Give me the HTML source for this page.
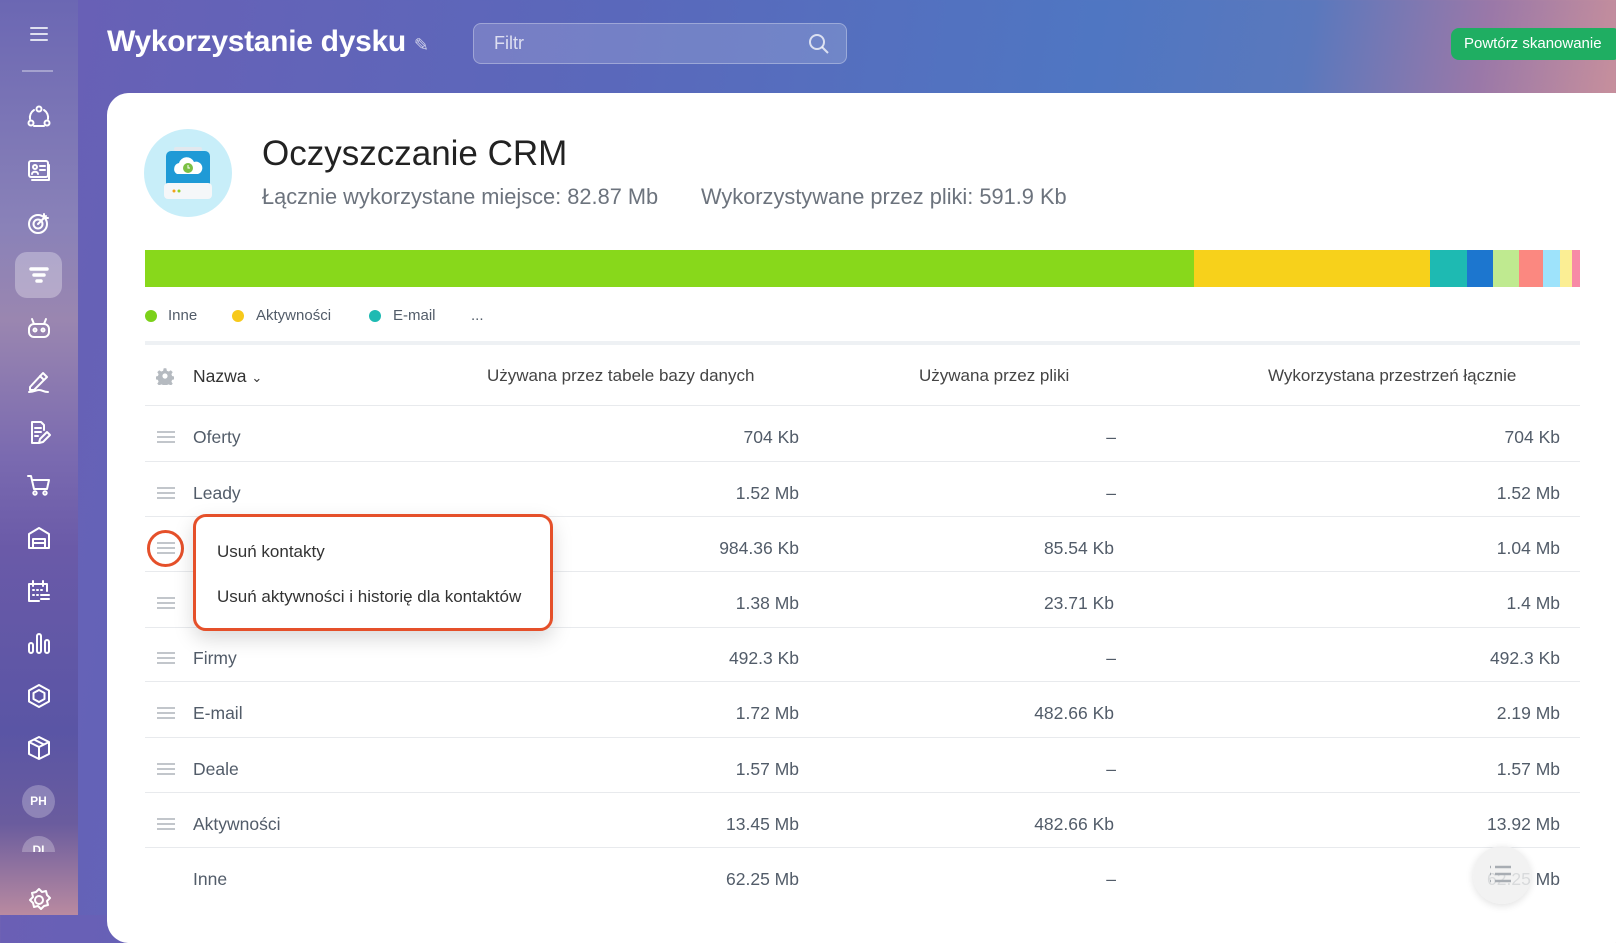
<!DOCTYPE html>
<html><head><meta charset="utf-8"><style>
*{margin:0;padding:0;box-sizing:border-box}
body{width:1616px;height:915px;overflow:hidden;font-family:"Liberation Sans",sans-serif;position:relative;
background:linear-gradient(100deg,#6a5fb5 0%,#5a68bb 35%,#4f76c2 62%,#5a78bd 74%,#9a78a8 84%,#c8909c 92%,#d8a8a0 100%)}
.side{position:absolute;left:0;top:0;width:78px;height:915px;background:linear-gradient(180deg,#6b67b3 0%,#8a82b8 25%,#9a86b0 35%,#7a6ab0 50%,#6a5aa8 60%,#5a55a5 80%,#6a5c9e 90%,#b98aa0 100%)}
.side .ic{position:absolute;left:25px;width:28px;height:28px}
.side svg{stroke:#fff;fill:none;stroke-width:2;stroke-linecap:round;stroke-linejoin:round}
.title{position:absolute;left:107px;top:25px;color:#fff;font-size:30px;font-weight:bold;letter-spacing:-0.3px}
.filter{position:absolute;left:473px;top:23px;width:374px;height:41px;border-radius:8px;background:rgba(255,255,255,.16);border:1px solid rgba(255,255,255,.3);color:rgba(255,255,255,.75);font-size:18px;padding:9px 20px}
.btn{position:absolute;left:1451px;top:28px;width:170px;height:32px;border-radius:8px;background:#1fae62;color:#fff;font-size:15px;padding:7px 13px}
.card{position:absolute;left:107px;top:93px;width:1530px;height:850px;background:#fff;border-radius:22px}
.a{position:absolute}
.t{color:#333;font-size:17.5px}
.g{color:#525c69}
.row{position:absolute;left:145px;width:1435px;height:1px;background:#e8eaed}
.hb{position:absolute;left:157px;width:18px;height:12px;border-top:2px solid #c2c6cb;border-bottom:2px solid #c2c6cb}
.hb:after{content:"";position:absolute;left:0;right:0;top:3px;height:2px;background:#c2c6cb}
.r{position:absolute;text-align:right;font-size:17.5px;color:#525c69}
</style></head><body>
<div class="side">
 <svg class="ic" style="top:20px" viewBox="0 0 28 28"><path d="M6 8h16M6 14h16M6 20h16" stroke="#dfe0f0"/></svg>
 <div style="position:absolute;left:22px;top:70px;width:31px;height:2px;background:rgba(255,255,255,.35)"></div>
 <svg class="ic" style="top:103px" viewBox="0 0 28 28"><circle cx="14" cy="6" r="2.5"/><circle cx="6" cy="20" r="2.5"/><circle cx="22" cy="20" r="2.5"/><path d="M9 7a9 9 0 0 0-4 9M19 7a9 9 0 0 1 4 9M9 23h10"/></svg>
 <svg class="ic" style="top:156px" viewBox="0 0 28 28"><rect x="4" y="5" width="19" height="16" rx="2"/><path d="M7 24h17V9"/><circle cx="10" cy="11" r="2"/><path d="M7 18c0-3 6-3 6 0M15 10h5M15 14h5"/></svg>
 <svg class="ic" style="top:209px" viewBox="0 0 28 28"><circle cx="13" cy="15" r="9"/><circle cx="13" cy="15" r="4.5"/><path d="M13 15l8-8M19 5v4h4"/></svg>
 <div style="position:absolute;left:15px;top:252px;width:47px;height:46px;border-radius:12px;background:rgba(255,255,255,.3)"></div>
 <svg class="ic" style="top:261px" viewBox="0 0 28 28"><path d="M6 8h16M9 14h10M12 20h4" stroke-width="3.5"/></svg>
 <svg class="ic" style="top:314px" viewBox="0 0 28 28"><rect x="4" y="10" width="20" height="13" rx="5"/><circle cx="10" cy="16" r="1.5"/><circle cx="18" cy="16" r="1.5"/><path d="M9 10l-2-5M19 10l2-5"/></svg>
 <svg class="ic" style="top:367px" viewBox="0 0 28 28"><path d="M5 20L18 6l4 4L9 23H5zM15 9l4 4M4 25c6 0 6-2 10-2s4 2 9 2"/></svg>
 <svg class="ic" style="top:419px" viewBox="0 0 28 28"><path d="M19 11V6l-3-3H7v21h6M10 9h6M10 13h6M10 17h3M14 24l1-4 7-7 3 3-7 7z"/></svg>
 <svg class="ic" style="top:471px" viewBox="0 0 28 28"><path d="M3 5h3l3 13h13l2-9H8"/><circle cx="10" cy="22" r="1.7"/><circle cx="20" cy="22" r="1.7"/></svg>
 <svg class="ic" style="top:524px" viewBox="0 0 28 28"><path d="M4 24V10l10-6 10 6v14zM8 24v-9h12v9M8 19h12"/></svg>
 <svg class="ic" style="top:577px" viewBox="0 0 28 28"><path d="M22 14V7H4v17h10M8 4v5M18 4v5M8 13h1M12 13h1M16 13h1M8 18h1M12 18h1M16 18h8M16 22h8"/></svg>
 <svg class="ic" style="top:629px" viewBox="0 0 28 28"><rect x="4" y="14" width="4" height="10" rx="2"/><rect x="12" y="5" width="4" height="19" rx="2"/><rect x="20" y="11" width="4" height="13" rx="2"/></svg>
 <svg class="ic" style="top:682px" viewBox="0 0 28 28"><path d="M14 3l10 5.5v11L14 25 4 19.5v-11z"/><path d="M14 8l5.5 3v6L14 20l-5.5-3v-6z"/></svg>
 <svg class="ic" style="top:734px" viewBox="0 0 28 28"><path d="M14 3l10 5v12l-10 5-10-5V8zM4 8l10 5 10-5M14 13v12M9 5.5l10 5"/></svg>
 <div style="position:absolute;left:22px;top:785px;width:33px;height:33px;border-radius:50%;background:rgba(255,255,255,.25);color:#fff;font-size:12px;font-weight:bold;text-align:center;line-height:33px">PH</div>
 <div style="position:absolute;left:22px;top:836px;width:33px;height:16px;border-radius:17px 17px 0 0;background:rgba(255,255,255,.25);color:#fff;font-size:12px;font-weight:bold;text-align:center;line-height:28px;overflow:hidden">DI</div>
 <svg class="ic" style="top:886px" viewBox="0 0 28 28"><circle cx="14" cy="14" r="4"/><path d="M14 3l3 3 4-1 1 4 3 3-3 3 1 4-4 1-3 3-3-3-4 1-1-4-3-3 3-3-1-4 4-1z"/></svg>
</div>
<div class="title">Wykorzystanie dysku <span style="font-weight:normal;font-size:18px;color:rgba(255,255,255,.7)">✎</span></div>
<div class="filter">Filtr<svg style="position:absolute;right:16px;top:9px" width="22" height="22" viewBox="0 0 22 22" fill="none" stroke="rgba(255,255,255,.75)" stroke-width="2"><circle cx="9" cy="9" r="7"/><path d="M14 14l6 6"/></svg></div>
<div class="btn">Powtórz skanowanie</div>
<div class="card"></div>
<svg class="a" style="left:144px;top:129px" width="88" height="88" viewBox="0 0 88 88"><circle cx="44" cy="44" r="44" fill="#c8eef9"/><rect x="22" y="22" width="44" height="48" rx="5" fill="#1f9ad6"/><rect x="30" y="18" width="28" height="4" rx="2" fill="#e2e8ee"/><rect x="20" y="54" width="48" height="16" rx="4" fill="#f5f7f9"/><circle cx="30" cy="62" r="1.5" fill="#f3a21a"/><circle cx="35" cy="62" r="1.5" fill="#8fd12a"/><path d="M33 45a6 6 0 0 1 2-11 8 8 0 0 1 15-1 6 6 0 0 1 4 12z" fill="#fff"/><circle cx="44" cy="39" r="5" fill="#7bc043"/><path d="M44 36v3h2" stroke="#fff" fill="none"/></svg>
<div class="a" style="left:262px;top:134px;font-size:35px;color:#222">Oczyszczanie CRM</div>
<div class="a g" style="left:262px;top:184px;font-size:21.8px;color:#6c737d">Łącznie wykorzystane miejsce: 82.87 Mb</div>
<div class="a g" style="left:701px;top:184px;font-size:21.8px;color:#6c737d">Wykorzystywane przez pliki: 591.9 Kb</div>
<div class="a" style="left:145px;top:250px;height:37px;width:1435px;display:flex">
 <div style="width:1049px;background:#88d81b"></div><div style="width:236px;background:#f7d11b"></div><div style="width:37px;background:#1ebab2"></div><div style="width:26px;background:#1c76cf"></div><div style="width:26px;background:#bfea90"></div><div style="width:24px;background:#fb8880"></div><div style="width:17px;background:#9ee3fb"></div><div style="width:12px;background:#fbee94"></div><div style="width:8px;background:#f78aa6"></div>
</div>
<div class="a" style="left:145px;top:310px;width:12px;height:12px;border-radius:50%;background:#7bd11a"></div>
<div class="a" style="left:168px;top:307px;font-size:15px;color:#525c69">Inne</div>
<div class="a" style="left:232px;top:310px;width:12px;height:12px;border-radius:50%;background:#f7c91b"></div>
<div class="a" style="left:256px;top:307px;font-size:15px;color:#525c69">Aktywności</div>
<div class="a" style="left:369px;top:310px;width:12px;height:12px;border-radius:50%;background:#1ebab2"></div>
<div class="a" style="left:393px;top:307px;font-size:15px;color:#525c69">E-mail</div>
<div class="a" style="left:471px;top:307px;font-size:15px;color:#525c69">...</div>
<div class="a" style="left:145px;top:341px;width:1435px;height:4px;background:#eef1f4"></div>
<svg class="a" style="left:156px;top:367px" width="18" height="18" viewBox="0 0 28 28"><path fill="#b5bac0" d="M12 2h4l1 4 3 1 3-2 3 3-2 3 1 3 4 1v4l-4 1-1 3 2 3-3 3-3-2-3 1-1 4h-4l-1-4-3-1-3 2-3-3 2-3-1-3-4-1v-4l4-1 1-3-2-3 3-3 3 2 3-1z"/><circle cx="14" cy="14" r="4" fill="#fff"/></svg>
<div class="a t" style="left:193px;top:366px">Nazwa <span style="font-size:13px">⌄</span></div>
<div class="a t" style="left:487px;top:366px;color:#444;font-size:17px">Używana przez tabele bazy danych</div>
<div class="a t" style="left:919px;top:366px;color:#444;font-size:17px">Używana przez pliki</div>
<div class="a t" style="left:1268px;top:366px;color:#444;font-size:17px">Wykorzystana przestrzeń łącznie</div>
<div class="row" style="top:405px"></div>
<div class="row" style="top:461px"></div><div class="row" style="top:516px"></div><div class="row" style="top:571px"></div><div class="row" style="top:627px"></div><div class="row" style="top:681px"></div><div class="row" style="top:737px"></div><div class="row" style="top:792px"></div><div class="row" style="top:847px"></div>

<div class="hb" style="top:431px"></div><div class="a t g" style="left:193px;top:427px">Oferty</div>
<div class="r" style="right:817px;top:427px">704 Kb</div><div class="r" style="right:500px;top:427px">–</div><div class="r" style="right:56px;top:427px">704 Kb</div>

<div class="hb" style="top:487px"></div><div class="a t g" style="left:193px;top:483px">Leady</div>
<div class="r" style="right:817px;top:483px">1.52 Mb</div><div class="r" style="right:500px;top:483px">–</div><div class="r" style="right:56px;top:483px">1.52 Mb</div>

<div class="hb" style="top:542px"></div>
<div class="r" style="right:817px;top:538px">984.36 Kb</div><div class="r" style="right:502px;top:538px">85.54 Kb</div><div class="r" style="right:56px;top:538px">1.04 Mb</div>

<div class="hb" style="top:597px"></div>
<div class="r" style="right:817px;top:593px">1.38 Mb</div><div class="r" style="right:502px;top:593px">23.71 Kb</div><div class="r" style="right:56px;top:593px">1.4 Mb</div>

<div class="hb" style="top:652px"></div><div class="a t g" style="left:193px;top:648px">Firmy</div>
<div class="r" style="right:817px;top:648px">492.3 Kb</div><div class="r" style="right:500px;top:648px">–</div><div class="r" style="right:56px;top:648px">492.3 Kb</div>

<div class="hb" style="top:707px"></div><div class="a t g" style="left:193px;top:703px">E-mail</div>
<div class="r" style="right:817px;top:703px">1.72 Mb</div><div class="r" style="right:502px;top:703px">482.66 Kb</div><div class="r" style="right:56px;top:703px">2.19 Mb</div>

<div class="hb" style="top:763px"></div><div class="a t g" style="left:193px;top:759px">Deale</div>
<div class="r" style="right:817px;top:759px">1.57 Mb</div><div class="r" style="right:500px;top:759px">–</div><div class="r" style="right:56px;top:759px">1.57 Mb</div>

<div class="hb" style="top:818px"></div><div class="a t g" style="left:193px;top:814px">Aktywności</div>
<div class="r" style="right:817px;top:814px">13.45 Mb</div><div class="r" style="right:502px;top:814px">482.66 Kb</div><div class="r" style="right:56px;top:814px">13.92 Mb</div>

<div class="a t g" style="left:193px;top:869px">Inne</div>
<div class="r" style="right:817px;top:869px">62.25 Mb</div><div class="r" style="right:500px;top:869px">–</div><div class="r" style="right:56px;top:869px">62.25 Mb</div>

<div class="a" style="left:147px;top:530px;width:37px;height:37px;border-radius:50%;border:3px solid #e5502a"></div>
<div class="a" style="left:193px;top:514px;width:360px;height:117px;border:3px solid #e5502a;border-radius:13px;background:#fff;box-shadow:0 8px 20px rgba(0,0,0,.15)"></div>
<div class="a t" style="left:217px;top:542px;font-size:17px">Usuń kontakty</div>
<div class="a t" style="left:217px;top:587px;font-size:17px">Usuń aktywności i historię dla kontaktów</div>

<div class="a" style="left:1473px;top:846px;width:58px;height:58px;border-radius:50%;background:rgba(240,240,240,.85);box-shadow:0 2px 8px rgba(0,0,0,.12)"></div>
<svg class="a" style="left:1488px;top:865px" width="26" height="18" viewBox="0 0 26 18" stroke="#a8adb3" stroke-width="2.5"><path d="M2 2h1M7 2h16M2 9h1M7 9h16M2 16h1M7 16h16"/></svg>
</body></html>
